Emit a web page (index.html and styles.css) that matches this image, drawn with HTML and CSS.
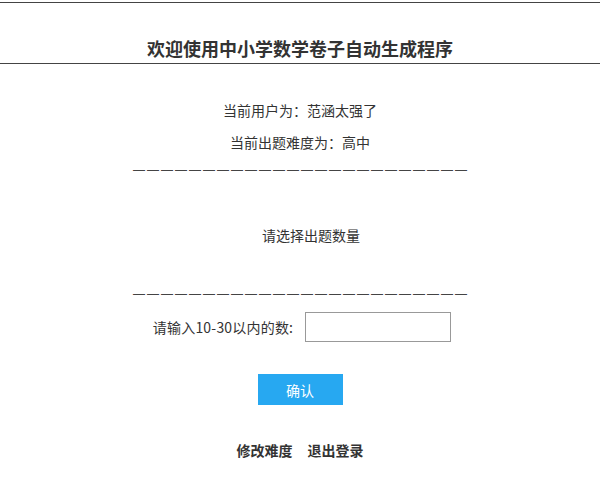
FILE: index.html
```html
<!DOCTYPE html>
<html lang="zh-CN">
<head>
<meta charset="utf-8">
<title>欢迎使用中小学数学卷子自动生成程序</title>
<link rel="stylesheet" href="styles.css">
</head>
<body>
<header class="top">
  <h1 class="title">欢迎使用中小学数学卷子自动生成程序</h1>
</header>
<main class="main">
  <p class="info info-user">当前用户为：范涵太强了</p>
  <p class="info info-level">当前出题难度为：高中</p>
  <p class="divider divider-1">————————————————————————</p>
  <p class="info prompt">请选择出题数量</p>
  <p class="divider divider-2">————————————————————————</p>
  <div class="form-row">
    <label class="label" for="count">请输入10-30以内的数:</label>
    <input class="input" id="count" type="text">
  </div>
  <button class="btn" type="button">确认</button>
  <nav class="links">
    <a class="link">修改难度</a>
    <a class="link">退出登录</a>
  </nav>
</main>
</body>
</html>
```

FILE: styles.css
```css
html, body {
  margin: 0;
  padding: 0;
  background: #fff;
}
body {
  font-family: "Noto Sans CJK SC", "Open Sans", sans-serif;
  font-size: 14px;
  color: #333;
}
.top {
  margin-top: 2px;
  border-top: 1px solid #444;
  border-bottom: 1px solid #444;
  padding: 33px 0 3px;
}
.title {
  margin: 0;
  font-size: 18px;
  line-height: 24px;
  font-weight: bold;
  text-align: center;
  color: #333;
}
.main {
  display: flex;
  flex-direction: column;
  align-items: center;
}
.info {
  margin: 0;
  line-height: 20px;
  text-align: center;
}
.info-user { margin-top: 36px; }
.info-level { margin-top: 12px; }
.divider {
  margin: 0;
  padding-left: 2px;
  font-family: "Liberation Sans", Arial, sans-serif;
  font-size: 12px;
  line-height: 20px;
  color: #444;
  letter-spacing: 2px;
  font-variant-ligatures: none;
  white-space: nowrap;
}
.divider-1 { margin-top: 8px; }
.prompt {
  margin-top: 45px;
  margin-left: 22px;
}
.divider-2 { margin-top: 39px; }
.form-row {
  margin-top: 8px;
  display: flex;
  align-items: center;
  gap: 12px;
  padding-left: 4px;
}
.label {
  font-size: 14px;
  line-height: 20px;
  letter-spacing: 0.2px;
}
.input {
  box-sizing: border-box;
  width: 146px;
  height: 30px;
  border: 1px solid #999;
  border-radius: 0;
  padding: 0 6px;
  margin: 0;
  font: inherit;
  outline: none;
}
.btn {
  margin-top: 32px;
  width: 85px;
  height: 31px;
  border: none;
  border-radius: 0;
  background: #27a8f1;
  color: #fff;
  font-family: inherit;
  font-size: 14px;
  padding: 0;
}
.links {
  margin-top: 35px;
  display: flex;
  gap: 15px;
  line-height: 20px;
}
.link {
  font-weight: bold;
  color: #333;
  text-decoration: none;
}
```
